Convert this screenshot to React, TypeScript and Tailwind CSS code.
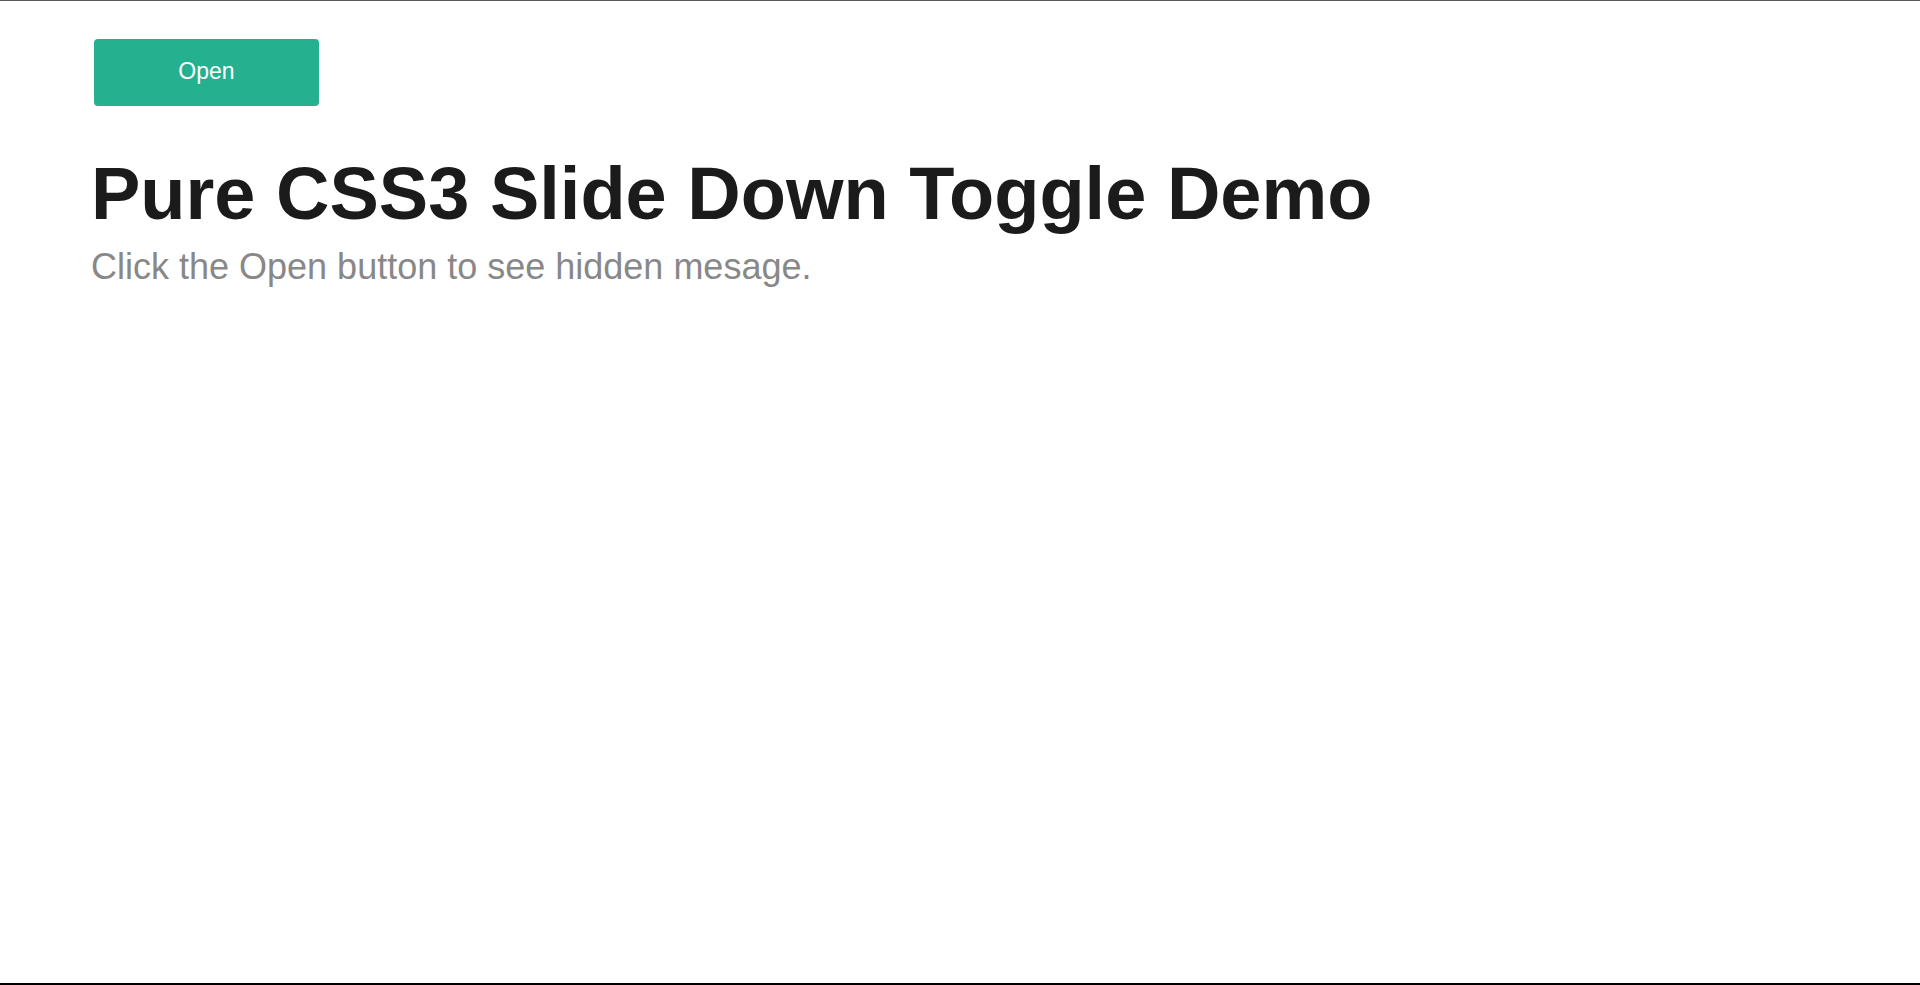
import React from "react";

export default function App() {
  return (
    <div
      className="w-[1920px] h-[985px] bg-white border-t border-t-[#5a5a5a] border-b-2 border-b-black box-border overflow-hidden"
      style={{ fontFamily: '"Liberation Sans", Arial, sans-serif' }}
    >
      <div className="pl-[91px] pt-[38px]">
        <button className="ml-[3px] w-[225px] h-[67px] rounded-[4px] bg-[#25b08f] text-white text-[23px] flex items-center justify-center pb-[2px]">
          Open
        </button>
        <h1 className="mt-[51px] text-[74px] font-bold leading-none text-[#1b1b1b]">
          Pure CSS3 Slide Down Toggle Demo
        </h1>
        <p className="mt-[18px] text-[36px] leading-none text-[#888888]">
          Click the Open button to see hidden mesage.
        </p>
      </div>
    </div>
  );
}
